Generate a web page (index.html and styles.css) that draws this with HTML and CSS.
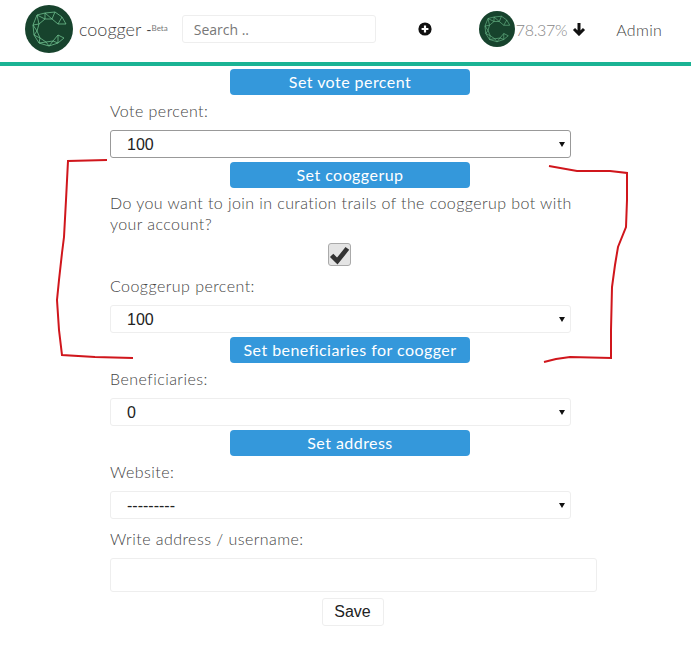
FILE: index.html
```html
<!DOCTYPE html>
<html lang="en">
<head>
    <meta charset="UTF-8">
    <meta name="viewport" content="width=device-width, initial-scale=1.0">
    <title>coogger</title>
    <link rel="stylesheet" href="styles.css">
</head>
<body>
    <svg width="0" height="0" class="defs">
        <symbol id="logo" viewBox="0 0 48 48">
            <circle cx="24" cy="24" r="24" fill="#17432d"/>
            <g fill="none" stroke="#6fbf8e" stroke-width="0.8">
                <path d="M37 12 L30 7 L20 8 L12 10 L8 20 L9 30 L14 38 L24 41 L33 38 L39 33"/>
                <path d="M37 12 L33 19 L27 14 L20 14 L14 19 L12 26 L15 33 L21 37 L28 36 L33 30 L39 33"/>
                <path d="M20 8 L27 14 L30 7 M20 8 L20 14 L12 10 L14 19 L8 20 L12 26 L9 30 L15 33 L14 38 L21 37 L24 41 L28 36 L33 38 L33 30"/>
                <path d="M37 12 L41 19 L33 19"/>
            </g>
        </symbol>
    </svg>
    <header class="topbar">
        <svg class="logo"><use href="#logo"/></svg>
        <span class="brand">coogger</span>
        <span class="brand-dash">-</span>
        <span class="beta">Beta</span>
        <input class="search" type="text" placeholder="Search ..">
        <svg class="plus" viewBox="0 0 14 14">
            <circle cx="7" cy="7" r="6.6" fill="#111"/>
            <path d="M7 3.6 V10.4 M3.6 7 H10.4" stroke="#fff" stroke-width="2.2"/>
        </svg>
        <svg class="logo-small"><use href="#logo"/></svg>
        <span class="power">78.37%</span>
        <svg class="arrow" viewBox="0 0 14 14">
            <path d="M7 1 V12 M2 7 L7 12 L12 7" fill="none" stroke="#111" stroke-width="3"/>
        </svg>
        <span class="admin">Admin</span>
    </header>

    <form class="settings">
        <button class="section-btn" type="button">Set vote percent</button>
        <label class="field-label">Vote percent:</label>
        <div class="select-wrap">
            <select class="field-select focused"><option>100</option></select>
        </div>

        <button class="section-btn" type="button">Set cooggerup</button>
        <p class="question">Do you want to join in curation trails of the cooggerup bot with your account?</p>
        <div class="check-row"><span class="check"><svg viewBox="0 0 24 24"><path d="M3 13 L9.5 19.5 L21 5" fill="none" stroke="#333" stroke-width="5.4"/></svg></span></div>
        <label class="field-label">Cooggerup percent:</label>
        <div class="select-wrap">
            <select class="field-select"><option>100</option></select>
        </div>

        <button class="section-btn" type="button">Set beneficiaries for coogger</button>
        <label class="field-label">Beneficiaries:</label>
        <div class="select-wrap">
            <select class="field-select"><option>0</option></select>
        </div>

        <button class="section-btn" type="button">Set address</button>
        <label class="field-label">Website:</label>
        <div class="select-wrap">
            <select class="field-select"><option>---------</option></select>
        </div>
        <label class="field-label address-label">Write address / username:</label>
        <input class="address" type="text">
        <div class="save-row"><button class="save" type="button">Save</button></div>
    </form>

    <!-- red marker drawn over the screenshot -->
    <svg class="marker" viewBox="0 0 691 647">
        <path d="M107 160 L68 161 L66 200 L64 237 L62 253 L59 280 L57 300 L59 330 L62 355 L95 357 L133 358"/>
        <path d="M549 166 L577 171 L610 171 L627 173 L627 200 L626 227 L618 247 L615 265 L612 287 L611 330 L611 358 L570 357 L556 359 L544 362"/>
    </svg>
</body>
</html>
```

FILE: styles.css
```css
body {
    font-family: Lato, "Open Sans", sans-serif;
    margin: 0;
    padding: 0;
    background-color: #fff;
    color: #444;
}
.defs {
    display: block;
    height: 0;
}
.topbar {
    display: flex;
    align-items: center;
    height: 58px;
    padding-left: 25px;
    padding-bottom: 4px;
    border-bottom: 4px solid #1ab394;
}
.logo {
    width: 48px;
    height: 48px;
}
.brand {
    margin-left: 6px;
    font-size: 18px;
    font-weight: 300;
    color: #444;
}
.brand-dash {
    margin-left: 5px;
    font-size: 14px;
}
.beta {
    margin-bottom: 3px;
    font-size: 8px;
    color: #777;
}
.search {
    box-sizing: border-box;
    width: 194px;
    height: 28px;
    margin-left: 14px;
    padding: 0 11px;
    border: 1px solid #eee;
    border-radius: 3px;
    font-family: "Open Sans", sans-serif;
    font-size: 14px;
}
.search::placeholder {
    color: #777;
    opacity: 1;
}
.plus {
    width: 14px;
    height: 14px;
    margin-left: 42px;
}
.logo-small {
    width: 36px;
    height: 36px;
    margin-left: 47px;
}
.power {
    margin-left: 1px;
    font-size: 16px;
    font-weight: 300;
    color: #888;
    letter-spacing: -0.3px;
}
.arrow {
    width: 14px;
    height: 14px;
    margin-left: 5px;
}
.admin {
    margin-left: 30px;
    font-size: 16px;
    font-weight: 300;
    color: #444;
    letter-spacing: 0.3px;
}
.settings {
    width: 487px;
    margin-left: 110px;
    padding-top: 3px;
}
.section-btn {
    display: block;
    width: 240px;
    height: 26px;
    margin-left: 120px;
    padding: 0 0 2px;
    border: none;
    border-radius: 4px;
    background: #3498db;
    color: #fff;
    font-family: Lato, sans-serif;
    font-size: 16px;
    letter-spacing: 0.45px;
}
.field-label {
    display: block;
    height: 24px;
    margin: 4px 0 7px;
    font-size: 16px;
    font-weight: 300;
    line-height: 24px;
    letter-spacing: 0.45px;
}
.address-label {
    margin-top: 8px;
}
.select-wrap {
    position: relative;
    width: 461px;
    margin-bottom: 4px;
}
.select-wrap::after {
    content: "";
    position: absolute;
    top: 12px;
    right: 6px;
    border-left: 3px solid transparent;
    border-right: 3px solid transparent;
    border-top: 5px solid #111;
}
.field-select {
    appearance: none;
    display: block;
    box-sizing: border-box;
    width: 100%;
    height: 28px;
    padding: 0 0 0 16px;
    border: 1px solid #eee;
    border-radius: 3px;
    background: #fff;
    color: #222;
    font-family: "Liberation Sans", Arial, sans-serif;
    font-size: 16px;
}
.field-select.focused {
    border-color: #999;
}
.question {
    width: 470px;
    margin: 4px 0 0;
    font-size: 16px;
    font-weight: 300;
    line-height: 21px;
    letter-spacing: 0.42px;
}
.check-row {
    width: 459px;
    display: flex;
    justify-content: center;
    margin-top: 9px;
}
.check {
    box-sizing: border-box;
    display: block;
    width: 23px;
    height: 23px;
    margin-bottom: 4px;
    border: 1px solid #aaa;
    border-radius: 3px;
    background: #e4e4e4;
}
.check svg {
    display: block;
    width: 21px;
    height: 21px;
}
.address {
    display: block;
    box-sizing: border-box;
    width: 487px;
    height: 34px;
    border: 1px solid #eee;
    border-radius: 3px;
}
.save-row {
    display: flex;
    justify-content: center;
    margin-top: 6px;
    padding-right: 2px;
}
.save {
    width: 62px;
    height: 28px;
    padding: 0;
    border: 1px solid #eee;
    border-radius: 3px;
    background: #fff;
    color: #222;
    font-family: "Liberation Sans", Arial, sans-serif;
    font-size: 16px;
}
.marker {
    position: absolute;
    top: 0;
    left: 0;
    width: 691px;
    height: 647px;
    pointer-events: none;
}
.marker path {
    fill: none;
    stroke: #d0161c;
    stroke-width: 2;
}
```
